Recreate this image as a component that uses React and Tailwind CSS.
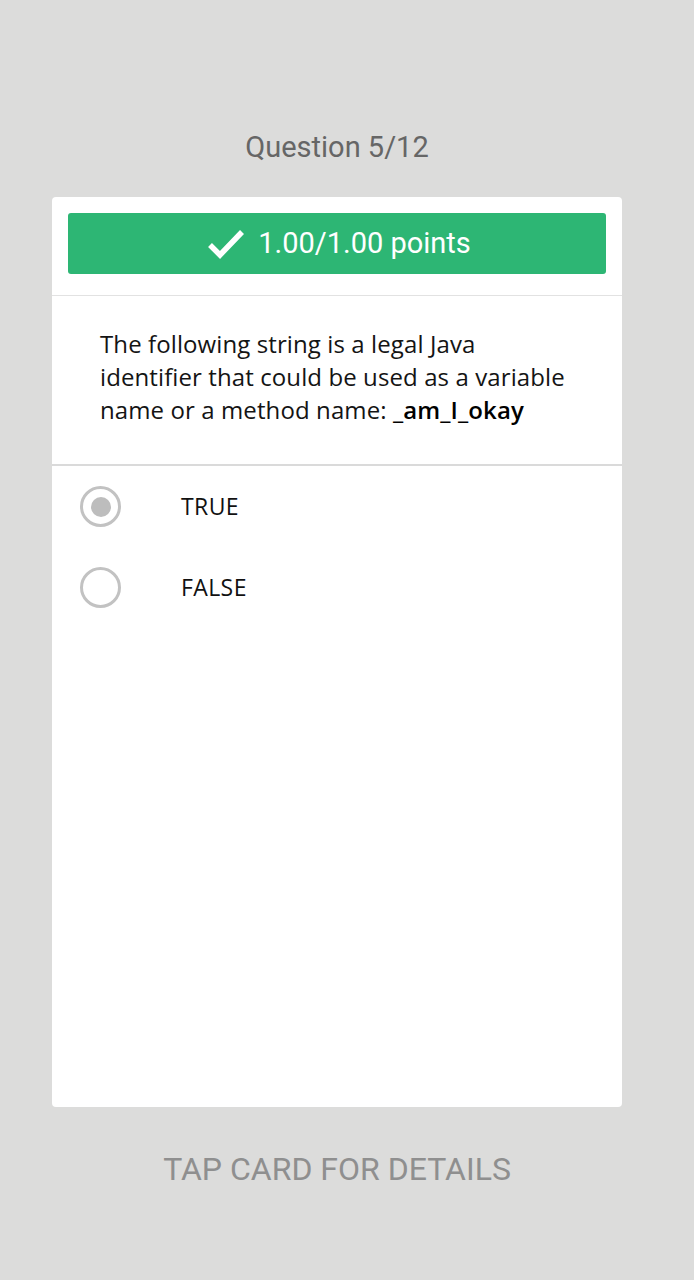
import React from "react";

function Radio({ checked }) {
  return (
    <div className="w-[41px] h-[41px] rounded-full border-[3px] border-[#c2c2c2] flex items-center justify-center">
      {checked && <div className="w-[20px] h-[20px] rounded-full bg-[#bdbdbd]" />}
    </div>
  );
}

export default function App() {
  return (
    <div className="w-[694px] h-[1280px] bg-[#dcdcdb] flex flex-col">
      <div className="h-[197px] w-[674px] flex justify-center pt-[131px]">
        <div className="text-[29px] text-[#666666] font-['Roboto',sans-serif] leading-[32px]">
          Question 5/12
        </div>
      </div>
      <div className="ml-[52px] w-[570px] h-[910px] bg-white rounded-[4px] flex flex-col">
        <div className="p-[16px] pb-[21px] border-b border-[#e2e2e2]">
          <div className="h-[61px] bg-[#2db674] rounded-[3px] flex items-center justify-center gap-[13px] text-white font-['Roboto',sans-serif]">
            <svg width="38" height="30" viewBox="0 0 38 30" className="mt-[1px] ml-[4px]">
              <polyline points="3,16 13,26 35,3" fill="none" stroke="white" strokeWidth="5.5" strokeLinecap="butt" strokeLinejoin="miter" />
            </svg>
            <span className="text-[29px] leading-none">1.00/1.00 points</span>
          </div>
        </div>
        <div className="h-[170px] border-b-2 border-[#dadada] pl-[48px] pr-[44px] pt-[31px] font-['Open_Sans',sans-serif] text-[24px] tracking-[0.1px] leading-[33px] text-[#141414]">
          The following string is a legal Java identifier that could be used as a variable name or a method name: <span className="font-semibold text-black">_am_I_okay</span>
        </div>
        <div className="flex flex-col font-['Open_Sans',sans-serif] text-[23px] tracking-[0.4px] text-[#111111]">
          <div className="h-[81px] flex items-center pl-[28px]">
            <Radio checked />
            <span className="ml-[60px]">TRUE</span>
          </div>
          <div className="h-[81px] flex items-center pl-[28px]">
            <Radio />
            <span className="ml-[60px]">FALSE</span>
          </div>
        </div>
      </div>
      <div className="w-[674px] flex justify-center pt-[46px]">
        <span className="text-[32px] leading-none text-[#8f8f8f] font-['Roboto',sans-serif]">TAP CARD FOR DETAILS</span>
      </div>
    </div>
  );
}
